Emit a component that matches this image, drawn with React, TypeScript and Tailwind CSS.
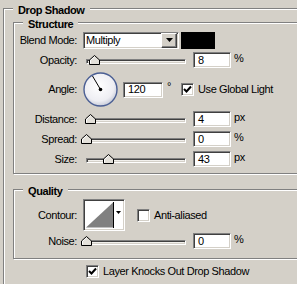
const sunken =
  "border border-t-[#808080] border-l-[#808080] border-b-white border-r-white shadow-[inset_1px_1px_0_#404040,inset_-1px_-1px_0_#d4d0c8]";

const Label = ({ children }: { children: string }) => (
  <div className="w-[63px] text-right whitespace-nowrap">{children}</div>
);

const NumBox = ({ value, w = "w-[38px]" }: { value: string; w?: string }) => (
  <div className={`${w} h-[16px] flex items-center pl-[4px] bg-white ${sunken}`}>
    {value}
  </div>
);

const Thumb = ({ left }: { left: number }) => (
  <svg
    width="11"
    height="10"
    viewBox="0 0 11 10"
    className="absolute top-[5px]"
    style={{ left }}
  >
    <polygon
      points="0.5,9.5 0.5,5 5.5,0.5 10.5,5 10.5,9.5"
      fill="#e4e1da"
      stroke="#000"
    />
    <polyline points="1.5,8.5 1.5,5.4 5.5,1.8" fill="none" stroke="#fff" />
  </svg>
);

const Slider = ({ thumb }: { thumb: number }) => (
  <div className="relative w-[103px] h-[20px]">
    <div className={`ml-[3px] mt-[9px] w-[100px] h-[5px] bg-[#f2f0ec] ${sunken}`} />
    <Thumb left={thumb} />
  </div>
);

const Check = ({ checked }: { checked: boolean }) => (
  <div className={`w-[13px] h-[13px] bg-white flex items-center justify-center ${sunken}`}>
    {checked && (
      <svg width="9" height="9" viewBox="0 0 9 9">
        <path d="M1 4 L3.5 6.5 L8 1.5" fill="none" stroke="#000" strokeWidth="2" />
      </svg>
    )}
  </div>
);

const SliderRow = ({
  label,
  thumb,
  value,
  unit,
}: {
  label: string;
  thumb: number;
  value: string;
  unit: string;
}) => (
  <div className="flex items-center h-[20px]">
    <Label>{label}</Label>
    <div className="ml-[6px] flex items-center">
      <Slider thumb={thumb} />
      <div className="ml-[7px]">
        <NumBox value={value} />
      </div>
      <span className="ml-[3px] -mt-[4px]">{unit}</span>
    </div>
  </div>
);

const Title = ({ children }: { children: string }) => (
  <div className="absolute -top-[5px] left-[9px] px-[5px] leading-[13px] font-bold bg-[#d4d0c8]">
    {children}
  </div>
);

const groupBox =
  "relative border border-[#808080] shadow-[inset_1px_1px_0_#fff,1px_1px_0_#fff]";

export default function App() {
  return (
    <div className="w-[297px] h-[284px] overflow-hidden bg-[#d4d0c8] pl-[3px] pt-[8px] text-[11px] leading-[13px] text-black tracking-[-0.4px] font-['Liberation_Sans',Arial,sans-serif]">
      <div className={`w-[320px] h-[300px] border-r-0 border-b-0 ${groupBox}`}>
        <Title>Drop Shadow</Title>

        <div className={`ml-[9px] mt-[13px] w-[320px] pt-[7px] pb-[4px] ${groupBox}`}>
          <Title>Structure</Title>

          <div className="flex items-center h-[20px]">
            <Label>Blend Mode:</Label>
            <div className="ml-[6px] flex items-center">
              <div className={`w-[96px] h-[17px] bg-white flex items-center ${sunken}`}>
                <span className="flex-1 pl-[2px]">Multiply</span>
                <div className="w-[16px] h-[15px] mr-[1px] bg-[#d4d0c8] border border-t-[#fff] border-l-[#fff] border-b-[#404040] border-r-[#404040] shadow-[inset_-1px_-1px_0_#808080] flex items-center justify-center">
                  <svg width="7" height="4" viewBox="0 0 7 4">
                    <polygon points="0,0 7,0 3.5,4" fill="#000" />
                  </svg>
                </div>
              </div>
              <div className="ml-[2px] w-[34px] h-[17px] bg-black" />
            </div>
          </div>

          <SliderRow label="Opacity:" thumb={6} value="8" unit="%" />

          <div className="flex items-center h-[39px]">
            <Label>Angle:</Label>
            <div className="ml-[6px] flex items-center">
              <svg width="35" height="35" viewBox="0 0 35 35">
                <defs>
                  <radialGradient id="dial" cx="45%" cy="40%" r="60%">
                    <stop offset="0%" stopColor="#ffffff" />
                    <stop offset="75%" stopColor="#eeeef3" />
                    <stop offset="100%" stopColor="#c9cdda" />
                  </radialGradient>
                </defs>
                <circle cx="17.5" cy="17.5" r="16.5" fill="url(#dial)" stroke="#4b5f94" strokeWidth="1.4" />
                <line x1="17.5" y1="17.5" x2="9.5" y2="4" stroke="#000" strokeWidth="1" />
                <circle cx="17.5" cy="17.5" r="1.8" fill="#000" />
              </svg>
              <div className="ml-[5px]">
                <NumBox value="120" w="w-[40px]" />
              </div>
              <span className="ml-[4px] -mt-[6px]">°</span>
              <div className="ml-[10px]">
                <Check checked />
              </div>
              <span className="ml-[4px] whitespace-nowrap">Use Global Light</span>
            </div>
          </div>

          <SliderRow label="Distance:" thumb={2} value="4" unit="px" />
          <SliderRow label="Spread:" thumb={-2} value="0" unit="%" />
          <SliderRow label="Size:" thumb={20} value="43" unit="px" />
        </div>

        <div className={`ml-[9px] mt-[15px] w-[320px] h-[70px] pt-[9px] ${groupBox}`}>
          <Title>Quality</Title>

          <div className="flex items-center h-[32px]">
            <Label>Contour:</Label>
            <div className="ml-[6px] flex items-center">
              <div className={`w-[42px] h-[32px] bg-white flex p-[2px] ${sunken}`}>
                <svg width="28" height="26" viewBox="0 0 28 26" className="border-r border-black">
                  <polygon points="0,26 28,0 28,26" fill="#808080" />
                </svg>
                <div className="flex-1 flex justify-center pt-[9px]">
                  <svg width="5" height="3" viewBox="0 0 5 3">
                    <polygon points="0,0 5,0 2.5,3" fill="#000" />
                  </svg>
                </div>
              </div>
              <div className="ml-[12px]">
                <Check checked={false} />
              </div>
              <span className="ml-[4px] whitespace-nowrap">Anti-aliased</span>
            </div>
          </div>

          <SliderRow label="Noise:" thumb={-2} value="0" unit="%" />
        </div>

        <div className="ml-[82px] mt-[6px] flex items-center">
          <Check checked />
          <span className="ml-[4px] whitespace-nowrap">Layer Knocks Out Drop Shadow</span>
        </div>
      </div>
    </div>
  );
}
